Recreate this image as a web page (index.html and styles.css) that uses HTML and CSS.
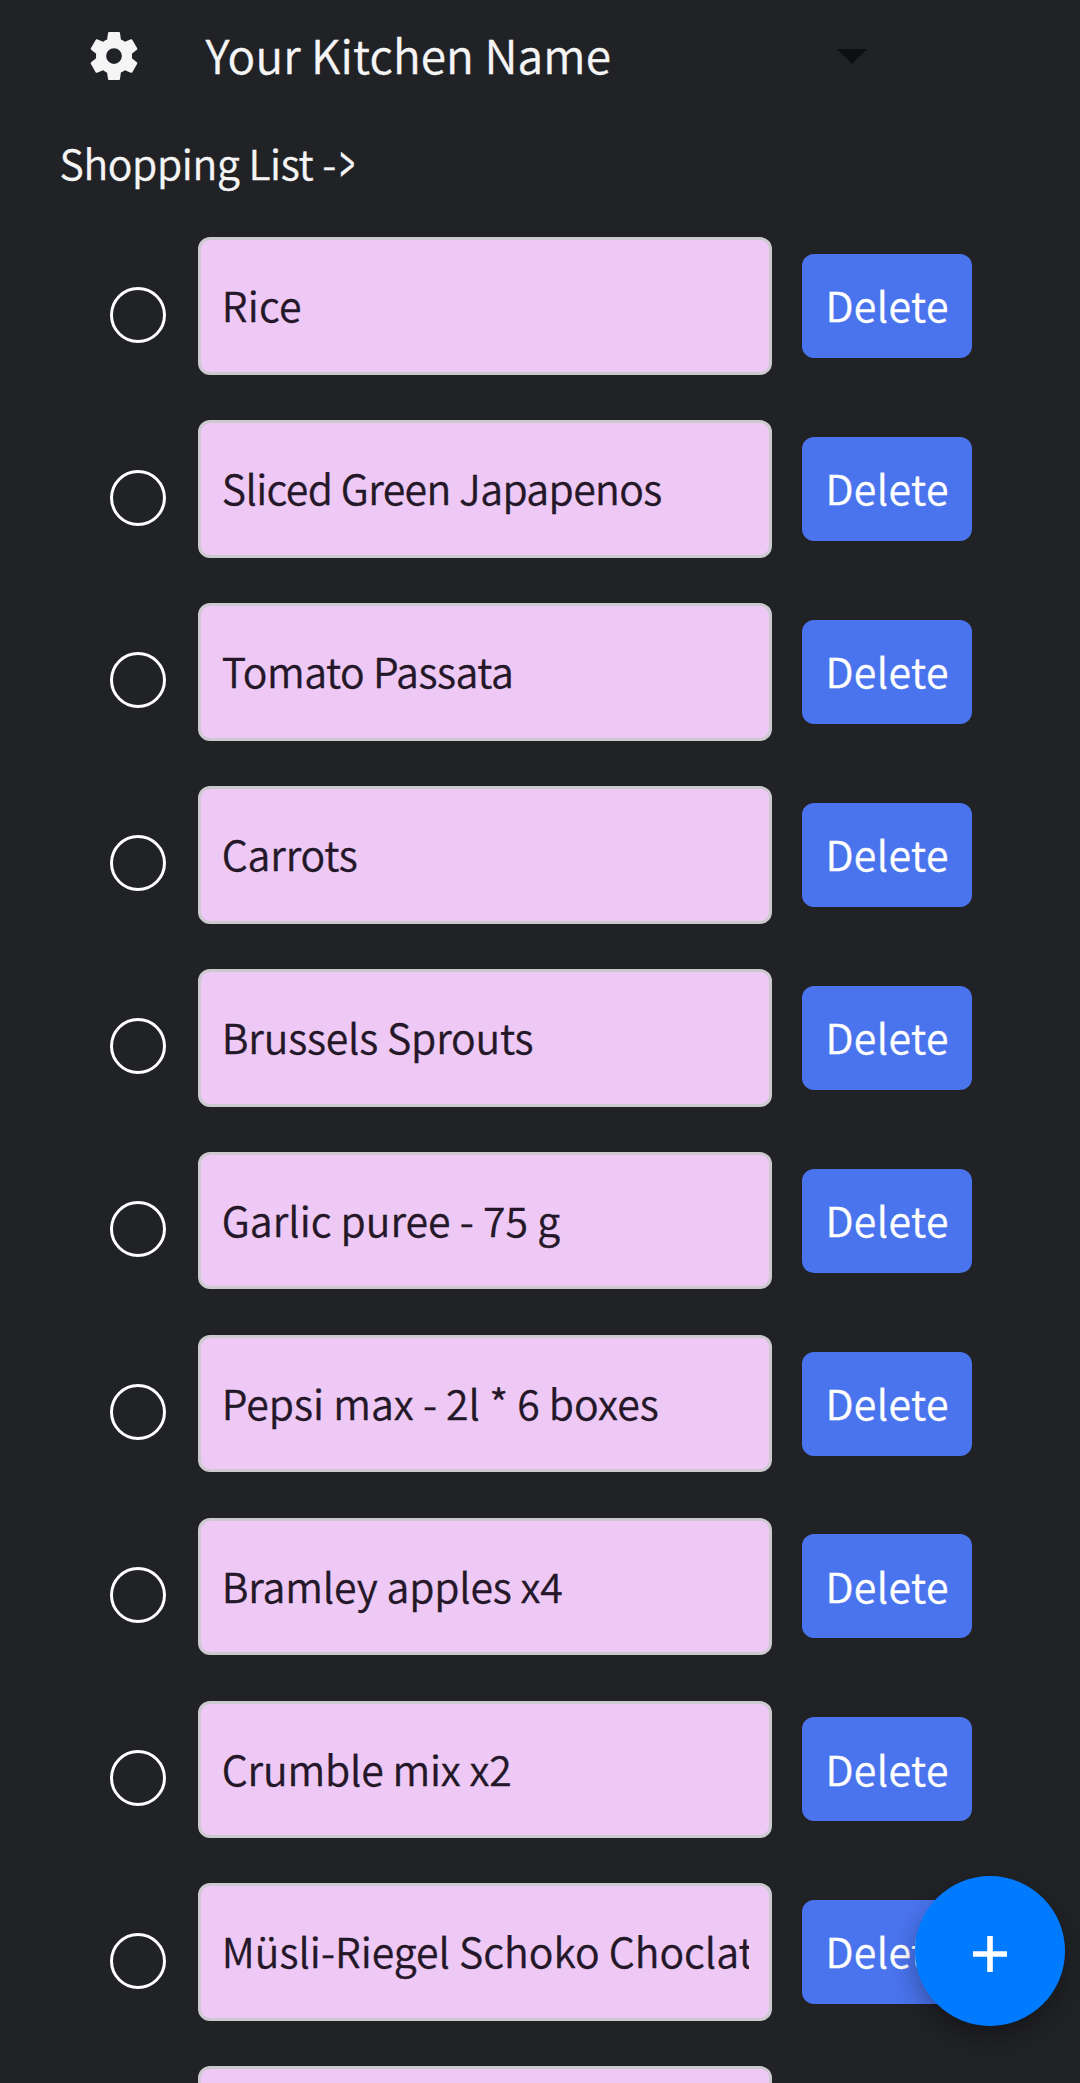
FILE: index.html
```html
<!DOCTYPE html>
<html lang="en">
<head>
<meta charset="utf-8">
<title>Shopping List</title>
<link rel="stylesheet" href="styles.css">
</head>
<body>
<header class="topbar">
  <svg class="gear" viewBox="0 0 24 24" aria-label="Settings"><path fill-rule="evenodd" d="M19.14 12.94c.04-.3.06-.61.06-.94 0-.32-.02-.64-.07-.94l2.03-1.58c.18-.14.23-.41.12-.61l-1.92-3.32c-.12-.22-.37-.29-.59-.22l-2.39.96c-.5-.38-1.03-.7-1.62-.94l-.36-2.54c-.04-.24-.24-.41-.48-.41h-3.84c-.24 0-.43.17-.47.41l-.36 2.54c-.59.24-1.13.57-1.62.94l-2.39-.96c-.22-.08-.47 0-.59.22L2.74 8.87c-.12.21-.08.47.12.61l2.03 1.58c-.05.3-.09.63-.09.94s.02.64.07.94l-2.03 1.58c-.18.14-.23.41-.12.61l1.92 3.32c.12.22.37.29.59.22l2.39-.96c.5.38 1.03.7 1.62.94l.36 2.54c.05.24.24.41.48.41h3.84c.24 0 .44-.17.47-.41l.36-2.54c.59-.24 1.13-.56 1.62-.94l2.39.96c.22.08.47 0 .59-.22l1.92-3.32c.12-.22.07-.47-.12-.61zM12 15.15a3.15 3.15 0 1 1 0-6.3a3.15 3.15 0 0 1 0 6.3z"/></svg>
  <span class="kitchen">Your Kitchen Name</span>
  <svg class="caret" viewBox="0 0 30 15"><path d="M0 0h30L15 15z"/></svg>
</header>
<h1 class="title">Shopping List -<span class="chevron">&gt;</span></h1>
<ul class="list">
  <li class="row"><span class="check"></span><div class="field"><span class="name wide">Rice</span></div><button class="delete">Delete</button></li>
  <li class="row"><span class="check"></span><div class="field"><span class="name tightest">Sliced Green Japapenos</span></div><button class="delete">Delete</button></li>
  <li class="row"><span class="check"></span><div class="field"><span class="name tighter">Tomato Passata</span></div><button class="delete">Delete</button></li>
  <li class="row"><span class="check"></span><div class="field"><span class="name tight">Carrots</span></div><button class="delete">Delete</button></li>
  <li class="row"><span class="check"></span><div class="field"><span class="name tight">Brussels Sprouts</span></div><button class="delete">Delete</button></li>
  <li class="row"><span class="check"></span><div class="field"><span class="name">Garlic puree - 75 g</span></div><button class="delete">Delete</button></li>
  <li class="row"><span class="check"></span><div class="field"><span class="name">Pepsi max - 2l * 6 boxes</span></div><button class="delete">Delete</button></li>
  <li class="row"><span class="check"></span><div class="field"><span class="name tight">Bramley apples x4</span></div><button class="delete">Delete</button></li>
  <li class="row"><span class="check"></span><div class="field"><span class="name tight">Crumble mix x2</span></div><button class="delete">Delete</button></li>
  <li class="row"><span class="check"></span><div class="field"><span class="name">Müsli-Riegel Schoko Choclat</span></div><button class="delete">Delete</button></li>
  <li class="row"><span class="check"></span><div class="field"></div></li>
</ul>
<button class="fab" aria-label="Add item"><svg viewBox="0 0 34 36"><path d="M14.2 0h5.6v15.2H34v5.6H19.8V36h-5.6V20.8H0v-5.6h14.2z"/></svg></button>
</body>
</html>
```
FILE: styles.css
```css
* { box-sizing: border-box; }

html, body { height: 2083px; overflow: hidden; }

body {
  margin: 0;
  background: #212226;
  color: #f5f5f6;
  font: 350 41px/60px "Noto Sans CJK SC", "Noto Sans", sans-serif;
  -webkit-text-stroke: .35px currentColor;
}

.topbar {
  display: flex;
  align-items: center;
  height: 108px;
  padding-left: 84px;
}

.gear { width: 60px; height: 60px; margin: 4px 0 0; fill: #f5f5f6; }

.kitchen {
  width: 631.5px;
  margin-left: 61.5px;
  font-size: 46px;
  letter-spacing: .11px;
}

.caret { width: 30px; height: 15px; margin-top: 5px; fill: #0e0f10; }

.title {
  height: 129.4px;
  margin: 0;
  padding: 24px 0 0 59.5px;
  font: inherit;
  letter-spacing: -.33px;
}

.chevron {
  display: inline-block;
  margin-left: 4px;
  transform: scale(.65, 1.36);
  transform-origin: 0 34px;
}

.list { margin: 0; padding: 0; list-style: none; }

.row {
  display: flex;
  align-items: center;
  height: 137.6px;
  margin-bottom: 45.3px;
  padding-left: 110px;
}

.check {
  width: 56px;
  height: 56px;
  margin: 17px 32px 0 0;
  border: 3px solid #fff;
  border-radius: 50%;
}

.field {
  display: flex;
  align-items: center;
  width: 574px;
  height: 100%;
  padding: 0 20.5px 3.6px 20.8px;
  border: 3px solid #cdcacf;
  border-radius: 12px;
  background: #efc9f6;
  color: #241728;
}

.name { flex: 1; overflow: hidden; white-space: nowrap; }

.tight { letter-spacing: -.19px; }
.tighter { letter-spacing: -.48px; }
.tightest { letter-spacing: -.63px; }
.wide { letter-spacing: .2px; }

.delete {
  width: 170px;
  height: 104px;
  margin-left: 30px;
  padding: 0 0 3.6px 23.4px;
  border: 0;
  border-radius: 12px;
  background: #4a74ed;
  color: #fff;
  font: inherit;
  letter-spacing: .4px;
  text-align: left;
}

.fab {
  position: fixed;
  right: 15px;
  bottom: 57px;
  display: flex;
  align-items: center;
  justify-content: center;
  width: 150px;
  height: 150px;
  padding: 5px 0 0;
  border: 0;
  border-radius: 50%;
  background: #007bff;
  box-shadow: 0 12px 24px rgba(0, 0, 0, .3);
}

.fab svg { width: 34px; height: 36px; fill: #fff; }
```
